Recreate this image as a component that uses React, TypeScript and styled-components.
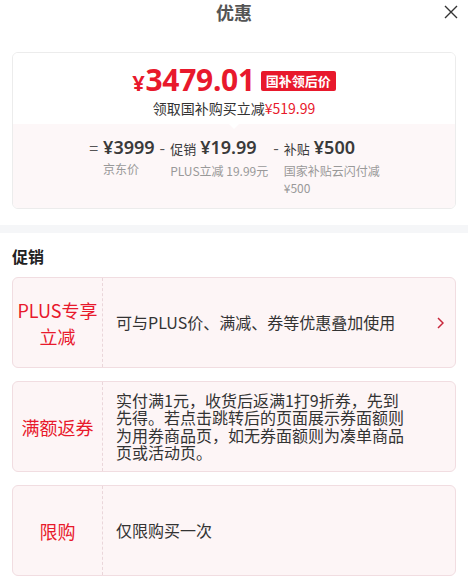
import React from "react";
import styled, { createGlobalStyle } from "styled-components";

const GlobalStyle = createGlobalStyle`
  html, body { margin: 0; padding: 0; background: #fff; }
  body { font-family: "Noto Sans CJK SC", "Noto Sans", sans-serif; color: #333; }
  * { box-sizing: border-box; }
`;

const RED = "#e8192c";

const Page = styled.div`
  width: 468px;
  background: #fff;
  padding-bottom: 7px;
`;

const Header = styled.div`
  position: relative;
  height: 24px;
  display: flex;
  align-items: center;
  justify-content: center;
`;

const Title = styled.div`
  font-size: 18px;
  font-weight: 700;
  color: #555;
  line-height: 24px;
`;

const Close = styled.button`
  position: absolute;
  right: 9px;
  top: 4px;
  width: 16px;
  height: 16px;
  padding: 0;
  border: 0;
  background: none;
  display: flex;
  align-items: center;
  justify-content: center;
`;

const Section = styled.div`
  padding: 0 12px;
`;

const PriceCard = styled.div`
  margin-top: 28px;
  border: 1px solid #ececec;
  border-radius: 6px;
  overflow: hidden;
`;

const PriceTop = styled.div`
  padding: 11px 0 6px;
  display: flex;
  flex-direction: column;
  align-items: center;
  background: #fff;
`;

const PriceLine = styled.div`
  display: flex;
  align-items: center;
  height: 34px;
`;

const BigPrice = styled.span`
  color: ${RED};
  font-weight: 700;
  font-size: 30px;
  letter-spacing: -0.3px;
  line-height: 34px;
  font-family: "Noto Sans", sans-serif;
`;

const Yen = styled.span`
  font-size: 22px;
  margin-right: 1px;
`;

const Tag = styled.span`
  margin-left: 6px;
  background: ${RED};
  color: #fff;
  font-size: 13px;
  font-weight: 700;
  line-height: 20px;
  height: 20px;
  padding: 0 5px;
  border-radius: 2px;
`;

const SubLine = styled.div`
  font-size: 14px;
  line-height: 20px;
  color: #333;
`;

const RedText = styled.span`
  color: ${RED};
`;

const PriceBottom = styled.div`
  position: relative;
  background: #fdf7f8;
  padding: 12px 0 12px;
  display: flex;
  justify-content: center;
  &::before {
    content: "";
    position: absolute;
    top: 0;
    left: 50%;
    margin-left: -5px;
    border-left: 5px solid transparent;
    border-right: 5px solid transparent;
    border-top: 5px solid #fff;
  }
`;

const Formula = styled.div`
  display: flex;
  align-items: flex-start;
`;

const Op = styled.span`
  font-size: 16px;
  line-height: 22px;
  color: #555;
  margin: 0 5px;
`;

const Term = styled.div<{ $max?: number }>`
  display: flex;
  flex-direction: column;
  max-width: ${(p) => (p.$max ? `${p.$max}px` : "none")};
`;

const Amount = styled.div`
  font-size: 18px;
  line-height: 22px;
  font-weight: 600;
  color: #3a3a3a;
  white-space: nowrap;
  font-family: "Noto Sans", "Noto Sans CJK SC", sans-serif;
`;

const AmountTag = styled.span`
  font-size: 13px;
  font-weight: 400;
  margin-right: 4px;
  font-family: "Noto Sans CJK SC", sans-serif;
`;

const TermLabel = styled.div`
  margin-top: 2px;
  font-size: 12px;
  line-height: 17px;
  color: #999;
`;

const Band = styled.div`
  margin-top: 16px;
  height: 8px;
  background: #f5f6f8;
`;

const Heading = styled.div`
  margin-top: 12px;
  font-size: 16px;
  font-weight: 700;
  color: #222;
  line-height: 22px;
`;

const PromoList = styled.div`
  margin-top: 10px;
  display: flex;
  flex-direction: column;
  gap: 13px;
`;

const PromoCard = styled.div`
  display: flex;
  min-height: 91px;
  background: #fdf5f6;
  border: 1px solid #f1dde1;
  border-radius: 6px;
`;

const PromoName = styled.div`
  width: 90px;
  flex: none;
  display: flex;
  align-items: center;
  justify-content: center;
  text-align: center;
  padding: 0 4px;
  border-right: 1px dashed #ead6da;
  color: ${RED};
  font-size: 18px;
  line-height: 26px;
`;

const PromoBody = styled.div`
  flex: 1;
  position: relative;
  display: flex;
  align-items: center;
  padding: 6px 48px 6px 13px;
  font-size: 16px;
  line-height: 17.5px;
  color: #333;
`;

const Chevron = styled.span`
  position: absolute;
  right: 11px;
  top: 50%;
  margin-top: -6px;
  display: flex;
`;

const promos = [
  { name: "PLUS专享立减", text: "可与PLUS价、满减、券等优惠叠加使用", arrow: true },
  {
    name: "满额返券",
    text: "实付满1元，收货后返满1打9折券，先到先得。若点击跳转后的页面展示券面额则为用券商品页，如无券面额则为凑单商品页或活动页。",
  },
  { name: "限购", text: "仅限购买一次" },
];

export default function App() {
  return (
    <Page>
      <GlobalStyle />
      <Header>
        <Title>优惠</Title>
        <Close aria-label="关闭">
          <svg width="14" height="14" viewBox="0 0 14 14">
            <path d="M1 1 L13 13 M13 1 L1 13" stroke="#333" strokeWidth="1.4" fill="none" />
          </svg>
        </Close>
      </Header>
      <Section>
        <PriceCard>
          <PriceTop>
            <PriceLine>
              <BigPrice>
                <Yen>¥</Yen>3479.01
              </BigPrice>
              <Tag>国补领后价</Tag>
            </PriceLine>
            <SubLine>
              领取国补购买立减<RedText>¥519.99</RedText>
            </SubLine>
          </PriceTop>
          <PriceBottom>
            <Formula>
              <Op>=</Op>
              <Term>
                <Amount>¥3999</Amount>
                <TermLabel>京东价</TermLabel>
              </Term>
              <Op>-</Op>
              <Term>
                <Amount>
                  <AmountTag>促销</AmountTag>¥19.99
                </Amount>
                <TermLabel>PLUS立减 19.99元</TermLabel>
              </Term>
              <Op>-</Op>
              <Term $max={100}>
                <Amount>
                  <AmountTag>补贴</AmountTag>¥500
                </Amount>
                <TermLabel>国家补贴云闪付减¥500</TermLabel>
              </Term>
            </Formula>
          </PriceBottom>
        </PriceCard>
      </Section>
      <Band />
      <Section>
        <Heading>促销</Heading>
        <PromoList>
          {promos.map((p) => (
            <PromoCard key={p.name}>
              <PromoName>{p.name}</PromoName>
              <PromoBody>
                {p.text}
                {p.arrow && (
                  <Chevron>
                    <svg width="7" height="12" viewBox="0 0 7 12">
                      <path d="M1 1 L6 6 L1 11" stroke="#c8283c" strokeWidth="1.5" fill="none" />
                    </svg>
                  </Chevron>
                )}
              </PromoBody>
            </PromoCard>
          ))}
        </PromoList>
      </Section>
    </Page>
  );
}
